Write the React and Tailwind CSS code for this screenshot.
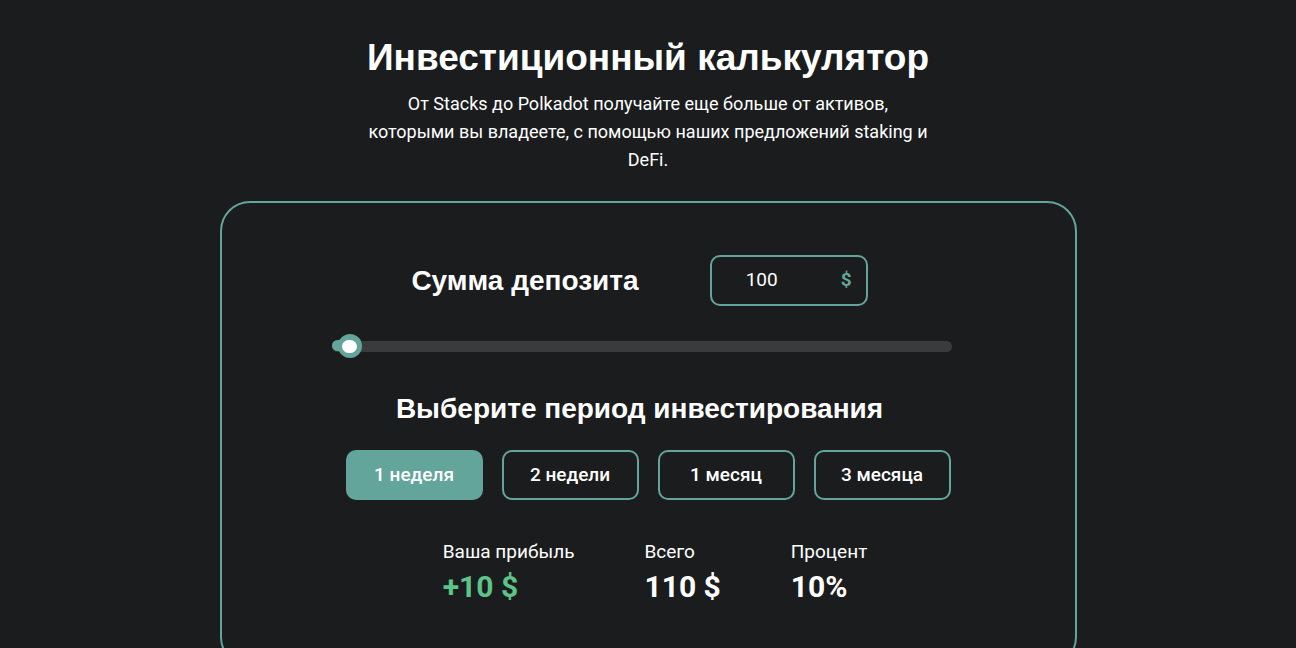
import { useState } from 'react';

const periods = [
  { label: '1 неделя', rate: 10 },
  { label: '2 недели', rate: 20 },
  { label: '1 месяц', rate: 40 },
  { label: '3 месяца', rate: 120 },
];

const headFont = { fontFamily: '"Liberation Sans", Arial, sans-serif' };

const App = () => {
  const [amount] = useState(100);
  const [active, setActive] = useState(0);

  const rate = periods[active].rate;
  const profit = Math.round((amount * rate) / 100);

  return (
    <div
      className="min-h-[648px] bg-[#1b1c1e] text-white overflow-hidden"
      style={{ fontFamily: 'Roboto, "Noto Sans", sans-serif' }}
    >
      {/* Header */}
      <div className="flex flex-col items-center pt-[36px]">
        <h1 className="text-[37px] leading-[44px] font-bold" style={headFont}>
          Инвестиционный калькулятор
        </h1>
        <p className="mt-[10px] w-[600px] text-center text-[18px] leading-[28px]">
          От Stacks до Polkadot получайте еще больше от активов,
          <br />
          которыми вы владеете, с помощью наших предложений staking и
          <br />
          DeFi.
        </p>
      </div>

      {/* Calculator card */}
      <div className="mx-auto mt-[27px] w-[857px] h-[466px] rounded-[30px] border-2 border-[#64a59b]">
        <div className="flex items-center justify-center gap-[71px] pt-[52px] pr-[17px]">
          <h2 className="text-[28px] leading-[32px] font-bold" style={headFont}>
            Сумма депозита
          </h2>
          <div className="flex items-center justify-between w-[158px] h-[51px] rounded-[10px] border-2 border-[#64a59b] pl-[34px] pr-[14px]">
            <span className="text-[19px]">{amount}</span>
            <span className="text-[19px] font-bold text-[#64a59b]">$</span>
          </div>
        </div>

        {/* Slider */}
        <div className="flex justify-center pr-[13px] mt-[28px]">
          <div className="relative w-[620px] h-[24px] flex items-center">
            <div className="w-full h-[11px] rounded-full bg-[#3a3b3d]" />
            <div className="absolute left-0 top-[6px] w-[20px] h-[11px] rounded-l-full bg-[#64a59b]" />
            <div className="absolute left-[6px] top-0 w-[24px] h-[24px] rounded-full bg-[#64a59b] flex items-center justify-center">
              <div className="w-[15px] h-[13px] rounded-full bg-white" />
            </div>
          </div>
        </div>

        <h2 className="mt-[35px] pr-[17px] text-center text-[28px] leading-[32px] font-bold" style={headFont}>
          Выберите период инвестирования
        </h2>

        <div className="mt-[25px] flex justify-center gap-[19px]">
          {periods.map((p, i) => (
            <button
              key={p.label}
              onClick={() => setActive(i)}
              className={`w-[137px] h-[50px] rounded-[10px] text-[19px] font-medium ${
                i === active ? 'bg-[#64a59b]' : 'border-2 border-[#64a59b]'
              }`}
            >
              {p.label}
            </button>
          ))}
        </div>

        {/* Results */}
        <div className="mt-[39px] flex justify-center gap-[70px] pl-[14px]">
          <div>
            <p className="text-[19px] leading-[26px]">Ваша прибыль</p>
            <p className="mt-[4px] text-[30px] leading-[36px] font-bold text-[#5dc389]">+{profit} $</p>
          </div>
          <div>
            <p className="text-[19px] leading-[26px]">Всего</p>
            <p className="mt-[4px] text-[30px] leading-[36px] font-bold">{amount + profit} $</p>
          </div>
          <div>
            <p className="text-[19px] leading-[26px]">Процент</p>
            <p className="mt-[4px] text-[30px] leading-[36px] font-bold">{rate}%</p>
          </div>
        </div>
      </div>
    </div>
  );
};

export default App;
